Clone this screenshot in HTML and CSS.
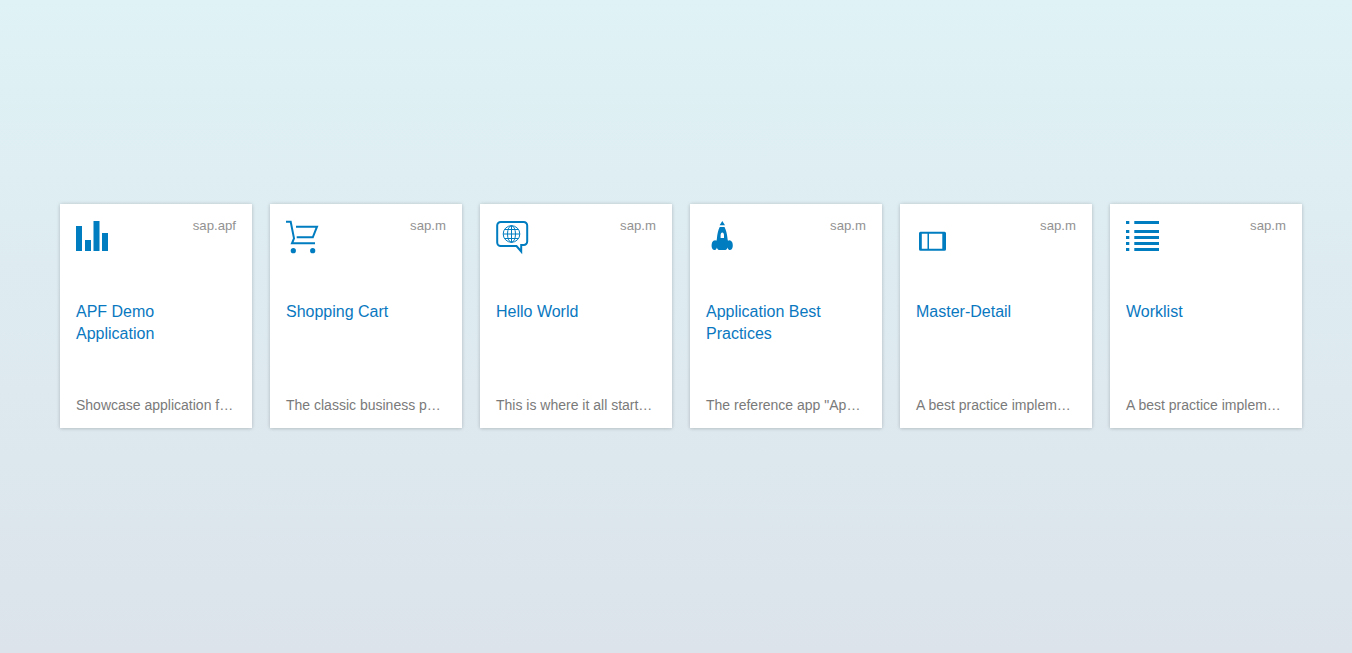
FILE: index.html
```html
<!DOCTYPE html>
<html lang="en">
<head>
<meta charset="utf-8">
<title>Demo Apps</title>
<link rel="stylesheet" href="styles.css">
</head>
<body>
<main class="tiles">
  <a class="tile">
    <div class="tile-head">
      <svg class="icon" viewBox="0 0 36 36"><path class="fill" d="M0 6h6v25H0zM9 20h6v11H9zM17.500 1h6v30h-6zM26 13h6v18h-6z"/></svg>
      <span class="lib">sap.apf</span>
    </div>
    <h2 class="title">APF Demo Application</h2>
    <p class="desc">Showcase application f…</p>
  </a>
  <a class="tile">
    <div class="tile-head">
      <svg class="icon" viewBox="0 0 36 36"><path class="line" d="M0 1.700h4.700L8 18.300l-2 5h23M10 6.700h21l-4.200 10.600H10.700"/><circle class="fill" cx="7.300" cy="30.700" r="2.600"/><circle class="fill" cx="26.700" cy="30.700" r="2.600"/></svg>
      <span class="lib">sap.m</span>
    </div>
    <h2 class="title">Shopping Cart</h2>
    <p class="desc">The classic business p…</p>
  </a>
  <a class="tile">
    <div class="tile-head">
      <svg class="icon" viewBox="0 0 36 36"><path class="line" d="M4.700 2h23a3.500 3.500 0 0 1 3.500 3.500v16a3.500 3.500 0 0 1-3.500 3.500h-2.500v6.500L20.500 26H4.700a3.500 3.500 0 0 1-3.500-3.500v-17A3.500 3.500 0 0 1 4.700 2z"/><g class="thin"><circle cx="15.500" cy="14" r="8.300"/><ellipse cx="15.500" cy="14" rx="4" ry="8.300"/><path d="M15.500 5.700v16.600M7.200 14h16.600M8.500 9.500h14M8.500 18.500h14"/></g></svg>
      <span class="lib">sap.m</span>
    </div>
    <h2 class="title">Hello World</h2>
    <p class="desc">This is where it all start…</p>
  </a>
  <a class="tile">
    <div class="tile-head">
      <svg class="icon" viewBox="0 0 36 36"><path class="fill" fill-rule="evenodd" d="M16.300 1l2.700 4.300h-5.400zM14.200 7h4.300c1.600 3 2.600 7 3 11.500.1 1 .2 1.500.5 2.200 1-1 3.200-.6 4.200 1.600 1.200 2.800.7 7.700-2.200 7.700-1.300 0-2.200-1.100-2.500-2.600-.4 1.900-1.500 2.600-3 2.600h-4.600c-1.500 0-2.600-.7-3-2.600-.3 1.500-1.200 2.600-2.500 2.600-2.900 0-3.400-4.900-2.200-7.700 1-2.200 3.200-2.600 4.200-1.600.3-.7.400-1.200.5-2.200.4-4.500 1.200-8.500 2.800-11.500zM16.300 12.500c-1 0-1.700 1.300-1.700 3v2.600h3.400v-2.600c0-1.700-.7-3-1.700-3z"/></svg>
      <span class="lib">sap.m</span>
    </div>
    <h2 class="title">Application Best Practices</h2>
    <p class="desc">The reference app "Ap…</p>
  </a>
  <a class="tile">
    <div class="tile-head">
      <svg class="icon" viewBox="0 0 36 36"><path class="fill" fill-rule="evenodd" d="M4.500 11.700h24a1.500 1.500 0 0 1 1.500 1.500v16a1.500 1.500 0 0 1-1.500 1.500h-24A1.500 1.500 0 0 1 3 29.200v-16a1.500 1.500 0 0 1 1.500-1.500zM5.800 13.800v15H11.500v-15zM13 13.800v15h13.300v-15z"/></svg>
      <span class="lib">sap.m</span>
    </div>
    <h2 class="title">Master-Detail</h2>
    <p class="desc">A best practice implem…</p>
  </a>
  <a class="tile">
    <div class="tile-head">
      <svg class="icon" viewBox="0 0 36 36"><path class="fill" d="M0 1h3.300v3H0zM8.300 1H33v3H8.300zM0 10h3.300v3H0zM8.300 10H33v3H8.300zM0 16h3.300v3H0zM8.300 16H33v3H8.300zM0 22h3.300v3H0zM8.300 22H33v3H8.300zM0 28h3.300v3H0zM8.300 28H33v3H8.300z"/></svg>
      <span class="lib">sap.m</span>
    </div>
    <h2 class="title">Worklist</h2>
    <p class="desc">A best practice implem…</p>
  </a>
</main>
</body>
</html>
```
FILE: styles.css
```css
* {
  box-sizing: border-box;
}

html,
body {
  height: 100%;
  margin: 0;
}

body {
  background: linear-gradient(180deg, #dff2f5 0%, #dce3eb 100%);
  font-family: "Liberation Sans", Arial, sans-serif;
  overflow: hidden;
}

.tiles {
  display: flex;
  gap: 18px;
  padding: 204px 0 0 60px;
}

.tile {
  display: flex;
  flex-direction: column;
  width: 192px;
  height: 224px;
  padding: 16px 16px 14px;
  background: #fff;
  box-shadow: 0 0 4px rgba(0, 0, 0, 0.15), 0 1px 3px rgba(0, 0, 0, 0.08);
}

.tile-head {
  display: flex;
  justify-content: space-between;
  align-items: flex-start;
  height: 81px;
}

.icon {
  display: block;
  width: 36px;
  height: 36px;
}

.fill {
  fill: #007cc0;
}

.line {
  fill: none;
  stroke: #007cc0;
  stroke-width: 2;
}

.thin {
  fill: none;
  stroke: #007cc0;
  stroke-width: 1;
}

.lib {
  color: #929292;
  font-size: 13.2px;
  line-height: 18px;
  margin-top: -3px;
}

.title {
  margin: 0;
  color: #0a78bf;
  font-size: 16px;
  font-weight: 400;
  line-height: 22px;
  height: 44px;
}

.desc {
  margin: auto 0 0;
  color: #7a7a7a;
  font-size: 14px;
  line-height: 18px;
  white-space: nowrap;
}
```
